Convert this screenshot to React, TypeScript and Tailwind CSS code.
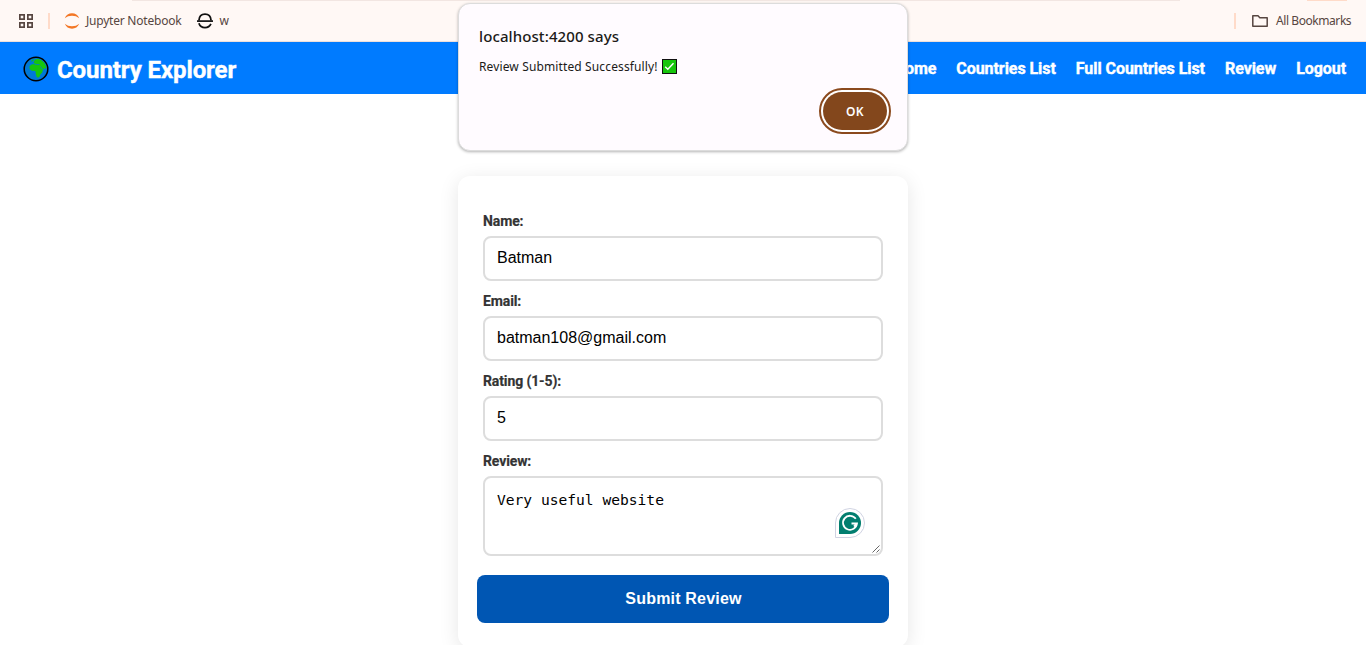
import React from "react";

const ui = "font-['Noto_Sans','Open_Sans',sans-serif]";

function GridIcon() {
  return (
    <svg width="14" height="14" viewBox="0 0 14 14" fill="none" stroke="#574641" strokeWidth="1.7">
      <rect x="0.85" y="0.85" width="4.3" height="4.3" />
      <rect x="8.85" y="0.85" width="4.3" height="4.3" />
      <rect x="0.85" y="8.85" width="4.3" height="4.3" />
      <rect x="8.85" y="8.85" width="4.3" height="4.3" />
    </svg>
  );
}

function JupyterIcon() {
  return (
    <svg width="16" height="16" viewBox="0 0 16 16" fill="#f37726">
      <path d="M0.8 5.2C2 2 4.8 0.3 8 0.3s6 1.7 7.2 4.9C13.3 3.5 10.8 2.7 8 2.7S2.7 3.5 0.8 5.2Z" />
      <path d="M0.8 10.8C2 14 4.8 15.7 8 15.7s6-1.7 7.2-4.9C13.3 12.5 10.8 13.3 8 13.3s-5.3-0.8-7.2-2.5Z" />
    </svg>
  );
}

function EIcon() {
  return (
    <svg width="16" height="16" viewBox="0 0 16 16" fill="none" stroke="#111" strokeWidth="1.8">
      <path d="M1.9 7.5C2.2 3.6 4.7 1.2 8 1.2s5.8 2.4 6.1 6.3" />
      <path d="M0 8.1h16" strokeWidth="1.7" />
      <path d="M1.9 10.2C2.8 13 5.2 14.6 8 14.6c2.6 0 4.9-1.4 5.9-3.7" />
    </svg>
  );
}

function GlobeIcon() {
  return (
    <svg width="26" height="26" viewBox="0 0 26 26">
      <circle cx="13" cy="13" r="11.8" fill="#0078d7" stroke="#000" strokeWidth="1.5" />
      <path d="m12 3.5 3-.7 3.5 1.400 2.800 2.600 1.900 3.700.1 2.500-1.600-1-1 1-1 1.500-.6 2.200-1.700 1.500-.7 2.300-1.700 1.300-1.300-.8-1-3.500-.3-2.600-3.600-.2-2.200-1.600-.1-2.800 2.100-1.700 2.900-.6-1-1.300Z" fill="#16c60c" />
      <path d="m7.500 5.800 1.800-2 1.800-.3-1 1.500Z" fill="#16c60c" />
      <path d="m11 7.700 2.200.8 3.300.1M17.500 10.400l1.800 3.100" stroke="#0078d7" strokeWidth="0.8" fill="none" />
    </svg>
  );
}

function CheckIcon() {
  return (
    <svg width="15" height="15" viewBox="0 0 15 15">
      <rect x="0.5" y="0.5" width="14" height="14" fill="#16c60c" stroke="#111" />
      <path d="m3.2 7.8 2.6 2.5 5.7-6" fill="none" stroke="#fff" strokeWidth="1.4" />
    </svg>
  );
}

function GrammarIcon() {
  return (
    <svg width="30" height="30" viewBox="0 0 30 30" fill="none">
      <path d="M0.5 29.5V15A14.5 14.5 0 1 1 15 29.5Z" fill="#fff" stroke="#d0d3e2" />
      <path d="M4 26V15A11 11 0 1 1 15 26Z" fill="#027e6f" />
      <path d="M20.8 10.8A7 7 0 1 0 22 15.5H16.5M19 18.5 22 15.5" stroke="#fff" strokeWidth="1.8" />
    </svg>
  );
}

function Label({ children }: { children: React.ReactNode }) {
  return (
    <div className="h-5 text-sm leading-5 font-bold tracking-[-0.12px] whitespace-nowrap text-[#333] [-webkit-text-stroke:0.2px_#333]">
      {children}
    </div>
  );
}

function Field({ label, value }: { label: string; value: string }) {
  return (
    <div className="h-20">
      <Label>{label}</Label>
      <div className="mt-[5px] flex h-[45px] items-center rounded-lg border-2 border-[#ddd] px-3 pb-[2px] font-['Liberation_Sans',sans-serif] text-base text-black">
        {value}
      </div>
    </div>
  );
}

export default function App() {
  return (
    <div className="relative h-[645px] w-[1366px] overflow-hidden bg-white font-[Roboto,sans-serif]">
      <div className={`relative flex h-[42px] items-center border-b border-[#ecdfdc] bg-[#fff8f5] text-xs tracking-[-0.22px] text-[#574641] ${ui}`}>
        <div className="absolute top-0 left-[132px] h-px w-[1048px] bg-[#f2e6e2]" />
        <div className="absolute top-0 left-[1307px] h-px w-10 bg-[#ffdbc9]" />
        <div className="ml-[19px]"><GridIcon /></div>
        <div className="ml-[15px] h-4 w-0.5 bg-[#ffdbc9]" />
        <div className="ml-[14px]"><JupyterIcon /></div>
        <span className="ml-[6px] pt-px whitespace-nowrap">Jupyter Notebook</span>
        <div className="ml-4"><EIcon /></div>
        <span className="ml-[6px] pt-px">w</span>
        <div className="mr-[16px] ml-auto h-4 w-0.5 bg-[#ffdbc9]" />
        <svg width="16" height="14" viewBox="0 0 16 14" fill="none" stroke="#574641" strokeWidth="1.5">
          <path d="M0.8 1.8h5.2l1.8 2h7.4v8.4H0.8Z" strokeLinejoin="round" />
        </svg>
        <span className="ml-2 w-[90px] pt-px tracking-[-0.43px] whitespace-nowrap">All Bookmarks</span>
      </div>

      <header className="flex h-[52px] items-center justify-between bg-[#007bff] pr-5 pl-[23px] font-bold text-white [-webkit-text-stroke:0.4px_white]">
        <div className="flex items-center gap-2">
          <div className="pt-[2px]"><GlobeIcon /></div>
          <span className="pt-[3px] text-2xl tracking-[-0.1px] whitespace-nowrap">Country Explorer</span>
        </div>
        <nav className="flex gap-5 pt-[2px] text-base tracking-[-0.06px] whitespace-nowrap">
          <span>Home</span>
          <span>Countries List</span>
          <span>Full Countries List</span>
          <span>Review</span>
          <span>Logout</span>
        </nav>
      </header>

      <main className="mx-auto mt-[82px] h-[471px] w-[450px] rounded-xl bg-white px-[25px] pt-[35px] shadow-[0_4px_20px_rgba(0,0,0,0.1)]">
        <Field label="Name:" value="Batman" />
        <Field label="Email:" value="batman108@gmail.com" />
        <Field label="Rating (1-5):" value="5" />
        <Label>Review:</Label>
        <div className="relative mt-[5px] h-20 rounded-lg border-2 border-[#ddd] px-3 pt-3 font-['DejaVu_Sans_Mono',monospace] text-[14.6px] leading-5 text-black">
          Very useful website
          <div className="absolute top-[30px] left-[350px]"><GrammarIcon /></div>
          <svg className="absolute right-[1px] bottom-[1px]" width="8" height="8" viewBox="0 0 8 8" stroke="#555" strokeWidth="0.9">
            <path d="M0.5 7.5 7.5 0.5M4.5 7.5 7.5 4.5" />
          </svg>
        </div>
        <button className="mt-[19px] -ml-[6px] flex h-12 w-[412px] items-center justify-center rounded-lg bg-[#0056b3] pl-px font-['Liberation_Sans',sans-serif] text-base font-bold tracking-[0.19px] text-white">
          Submit Review
        </button>
      </main>

      <div role="alertdialog" className={`absolute top-[3px] left-[458px] h-[148px] w-[450px] rounded-xl border border-[#dcdcdc] bg-[#fffbff] px-5 pt-[21px] text-[#201a18] shadow-[0_1px_3px_rgba(0,0,0,0.3)] ${ui}`}>
        <div className="text-[15px] leading-[22px] font-medium tracking-[0.1px] whitespace-nowrap">localhost:4200 says</div>
        <div className="mt-[10px] flex h-[18px] items-center text-xs">
          <span className="pt-[2px] tracking-[0.13px] whitespace-nowrap">Review Submitted Successfully!</span>
          <span className="ml-1"><CheckIcon /></span>
        </div>
        <button className="absolute top-[84px] left-[360px] flex h-[46px] w-[72px] items-center justify-center rounded-full border-2 border-[#8b4a1e] bg-white p-[2px]">
          <span className="flex h-full w-full items-center justify-center rounded-full bg-[#83471c] pt-px text-xs font-semibold tracking-[0.4px] text-white">OK</span>
        </button>
      </div>
    </div>
  );
}
